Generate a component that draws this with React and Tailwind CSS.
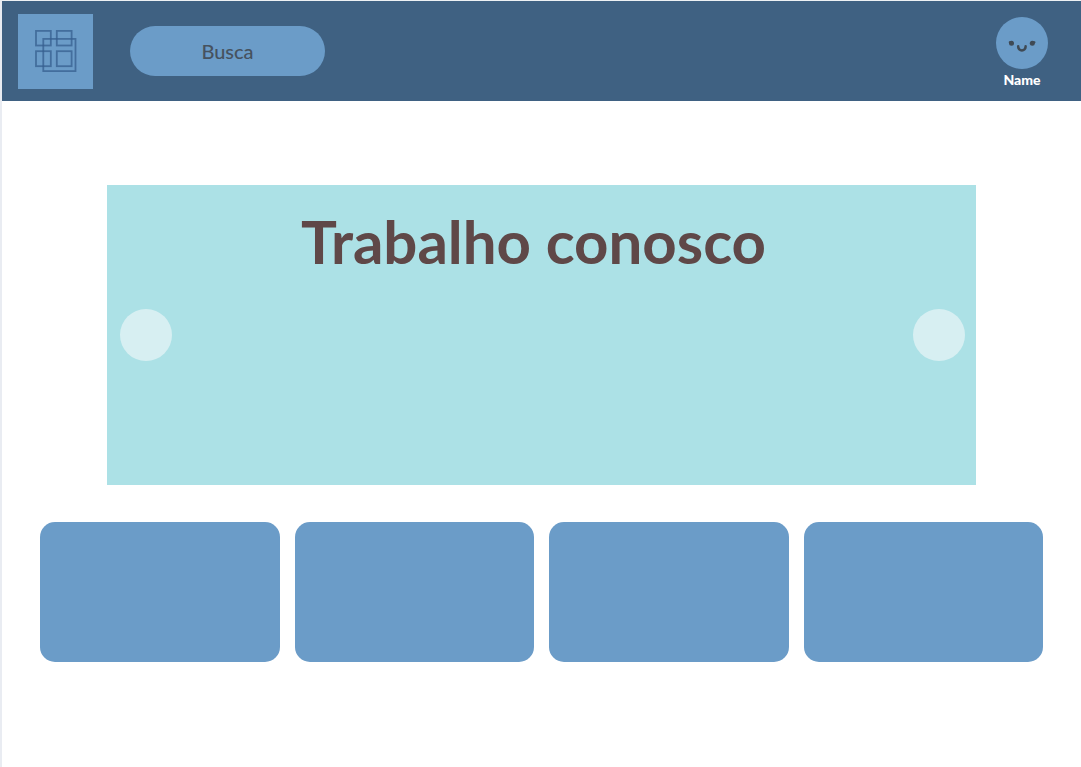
const cards = [1, 2, 3, 4];

function Logo() {
  return (
    <a href="#" aria-label="Home" className="flex size-[75px] items-center justify-center bg-[#6b9cc8]">
      <svg viewBox="0 0 42 42" className="size-[42px]" fill="none" stroke="#365f8f" strokeOpacity="0.75" strokeWidth="1.8">
        <rect x="1" y="0.9" width="14.8" height="14.6" />
        <rect x="21.8" y="0.9" width="14.8" height="14.6" />
        <rect x="1" y="21.2" width="14.8" height="15" />
        <rect x="21.8" y="21.2" width="14.8" height="15" />
        <rect x="8.3" y="8.9" width="32.2" height="32.2" />
      </svg>
    </a>
  );
}

function Avatar() {
  return (
    <svg viewBox="0 0 52 52" className="size-[52px]" aria-hidden="true">
      <circle cx="26" cy="26" r="26" fill="#6b9cc8" />
      <circle cx="15.5" cy="26.2" r="2.5" fill="#3f4a55" />
      <circle cx="36.3" cy="26.2" r="2.5" fill="#3f4a55" />
      <path d="M13.7 25.2h2M36.5 25.200h2" stroke="#3f4a55" strokeWidth="2" strokeLinecap="round" />
      <path d="M22.200 29.300v.5a3.600 3.600 0 0 0 7.400 0v-.5" fill="none" stroke="#3f4a55" strokeWidth="2.500" strokeLinecap="round" />
    </svg>
  );
}

export default function App() {
  return (
    <div className="min-h-screen border-t border-l-2 border-t-[#edf1f4] border-l-[#e9ecf2] bg-white font-['Lato',sans-serif]">
      <header className="flex h-[100px] items-center bg-[#3f6182] pr-[33px] pl-4">
        <Logo />
        <input
          type="text"
          aria-label="Busca"
          placeholder="Busca"
          className="ml-[37px] h-[50px] w-[195px] rounded-full bg-[#6b9cc8] px-4 text-center text-xl font-medium text-[#46525f] outline-none placeholder:text-[#46525f]"
        />
        <button type="button" className="ml-auto flex flex-col items-center gap-[3px] pt-[3px] text-sm leading-4 font-black text-white">
          <Avatar />
          Name
        </button>
      </header>
      <main>
        <section className="mx-[105px] mt-[84px] flex h-[300px] flex-col bg-[#ace1e6]">
          <h1 className="pt-5 pr-4 text-center text-6xl leading-[72px] font-bold text-[#5f4848]">Trabalho conosco</h1>
          <div className="flex justify-between pt-8 pr-[11px] pl-[13px]">
            <button type="button" aria-label="Anterior" className="size-[52px] rounded-full bg-[#d7eff2]" />
            <button type="button" aria-label="Próximo" className="size-[52px] rounded-full bg-[#d7eff2]" />
          </div>
        </section>
        <ul className="mx-[38px] mt-[37px] grid grid-cols-4 gap-[15px]">
          {cards.map((card) => (
            <li key={card} className="h-[140px] rounded-[15px] bg-[#6b9cc8]" />
          ))}
        </ul>
      </main>
    </div>
  );
}
